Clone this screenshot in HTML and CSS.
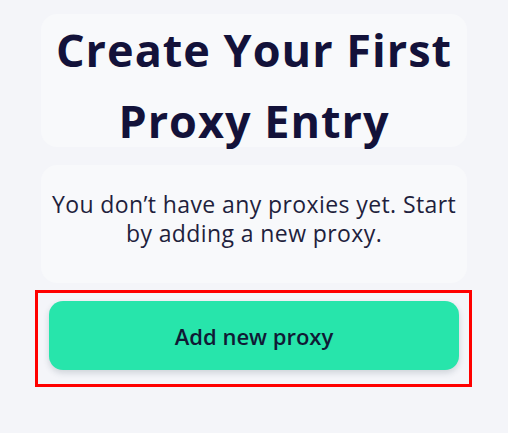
FILE: index.html
```html
<!DOCTYPE html>
<html>

<head>
	<title>Proxies</title>
	<link rel="stylesheet" href="styles.css">
</head>

<body>
	<main class="empty">
		<div class="card title-card">
			<h1>Create Your First Proxy Entry</h1>
		</div>
		<div class="card text-card">
			<p>You don’t have any proxies yet. Start by adding a new proxy.</p>
		</div>
		<!-- выделенная кнопка -->
		<div class="highlight">
			<button class="add-btn">Add new proxy</button>
		</div>
	</main>
</body>

</html>
```

FILE: styles.css
```css
html,
body {
	margin: 0;
	background-color: #f4f5f9;
}

body {
	font-family: "Open Sans", "Noto Sans", sans-serif;
	color: #15143a;
	padding-top: 14px;
}

.empty {
	width: 426px;
	margin: 0 auto;
	display: flex;
	flex-direction: column;
}

.card {
	background-color: #f8f9fb;
	border-radius: 16px;
	text-align: center;
}

/* заголовок */
.title-card {
	height: 133px;
}

h1 {
	margin: 0;
	font-size: 45px;
	line-height: 71px;
	font-weight: 700;
	letter-spacing: 1px;
	color: #13123a;
}

.text-card {
	margin-top: 18px;
	padding: 25px 7px 35px;
}

.text-card p {
	margin: 0;
	font-size: 23px;
	line-height: 29px;
	font-weight: 400;
	letter-spacing: 0.4px;
	color: #1f1f3d;
}

/* красная рамка вокруг кнопки */
.highlight {
	margin: 7px -5px 0 -6px;
	border: 3px solid #ff0000;
	padding: 8px 10px 14px 11px;
}

.add-btn {
	display: block;
	width: 100%;
	height: 69px;
	border: none;
	border-radius: 14px;
	background-color: #27e5ab;
	box-shadow: 0 3px 6px rgba(40, 60, 80, 0.18);
	font-family: "Open Sans", "Noto Sans", sans-serif;
	font-size: 22px;
	font-weight: 600;
	color: #101a35;
	cursor: pointer;
}
```
